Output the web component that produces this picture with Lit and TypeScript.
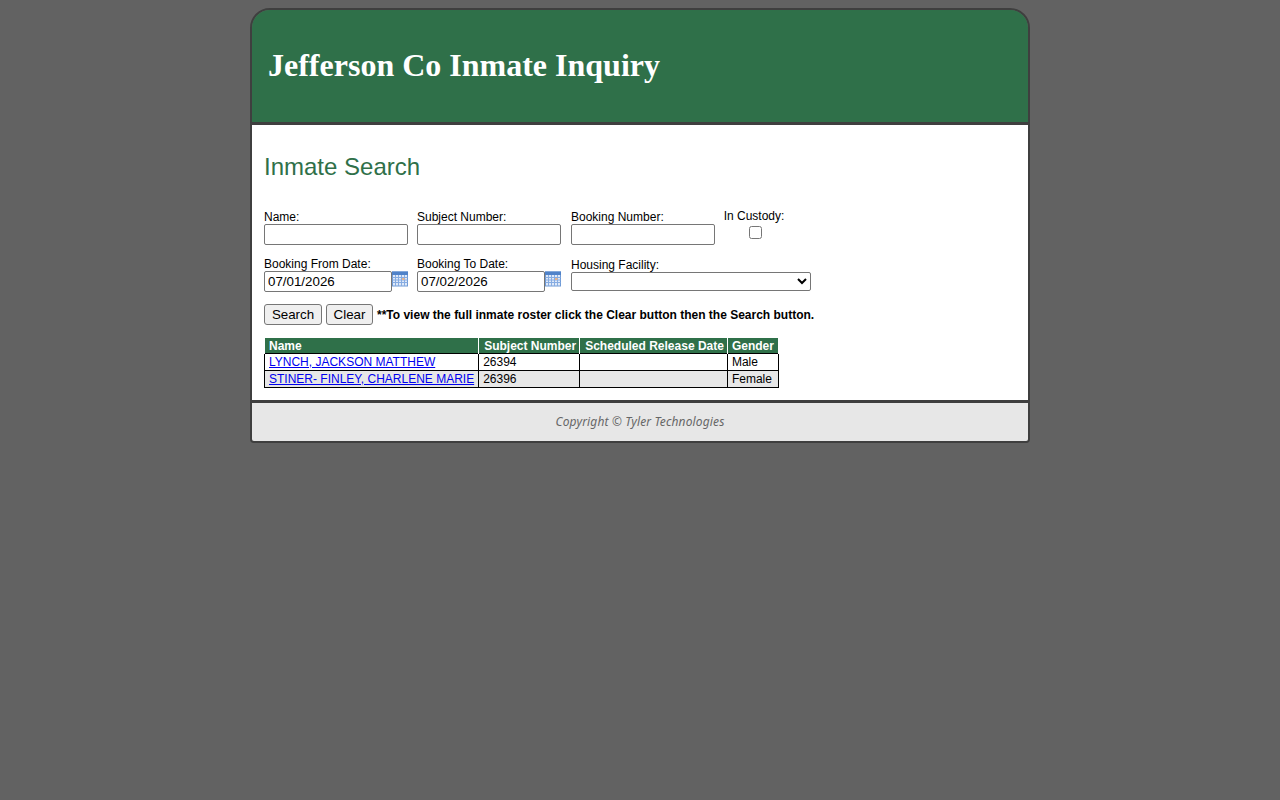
import { LitElement, html, css } from "lit";
import { customElement } from "lit/decorators.js";

const calIcon = html`<svg class="cal" width="16" height="16" viewBox="0 0 16 16">
  <rect x="0.5" y="1" width="15" height="14" fill="#dfe9f8" stroke="#6f9ad6"/>
  <rect x="0" y="0.5" width="16" height="3.5" fill="#4f82c9"/>
  <path d="M0.5 6.5H15.5M0.5 9H15.5M0.5 11.5H15.5M3.5 4V15M6.5 4V15M9.5 4V15M12.5 4V15" stroke="#86ace2" stroke-width="1" fill="none"/>
  <rect x="10" y="7" width="2.5" height="2" fill="#e8b48c"/>
</svg>`;

@customElement("app-root")
export class AppRoot extends LitElement {
  static styles = css`
    :host {
      display: block;
      min-height: 800px;
      background: #626262;
      font-family: "Liberation Sans", Arial, sans-serif;
      font-size: 12px;
      color: #000;
      padding-top: 8px;
      box-sizing: border-box;
    }
    .page {
      width: 780px;
      margin: 0 auto;
      box-sizing: border-box;
      border: 2px solid #3f3f3f;
      border-radius: 20px 20px 4px 4px;
      overflow: hidden;
    }
    .head {
      height: 110px;
      padding-bottom: 2px;
      background: #2f7049;
      border-bottom: 3px solid #3f3f3f;
      display: flex;
      align-items: center;
      padding-left: 16px;
      box-sizing: content-box;
    }
    .head h1 {
      margin: 0;
      color: #fff;
      font: bold 32px "Liberation Serif", "Times New Roman", serif;
    }
    .main {
      background: #fff;
      padding: 0 12px;
      height: 275px;
      box-sizing: border-box;
      overflow: hidden;
    }
    h2 {
      margin: 0;
      padding-top: 28px;
      height: 85px;
      box-sizing: border-box;
      font: normal 24px/28px "Liberation Sans", Arial, sans-serif;
      color: #2f7049;
    }
    .row {
      display: flex;
      align-items: flex-start;
    }
    .r1 { height: 47px; }
    .r2 { height: 47px; }
    .field { display: flex; flex-direction: column; }
    .f1 { width: 153px; }
    .f2 { width: 154px; }
    .f3 { width: 153px; }
    label { display: block; height: 14px; line-height: 14px; white-space: nowrap; }
    input[type="text"] {
      box-sizing: border-box;
      height: 21px;
      width: 144px;
      margin: 0;
      padding: 1px 3px;
      font: 13.33px "Liberation Sans", Arial, sans-serif;
      border: 1px solid #767676;
      border-radius: 2px;
      background: #fff;
      color: #000;
    }
    .date input[type="text"] { width: 128px; }
    .dateline { display: flex; align-items: flex-start; }
    .cal { display: block; }
    .custody { align-items: center; width: 60px; margin-top: -1px; }
    .custody input { margin: 3px 0 0 3px; width: 13px; height: 13px; }
    .housing label { margin-top: 1px; height: 13px; }
    select {
      box-sizing: border-box;
      width: 240px;
      height: 19px;
      margin: 1px 0 0;
      font: 13.33px "Liberation Sans", Arial, sans-serif;
      background: #fff;
      border: 1px solid #767676;
      border-radius: 2px;
    }
    .actions {
      display: flex;
      gap: 4px;
      height: 34px;
      align-items: flex-start;
    }
    button {
      box-sizing: border-box;
      height: 21px;
      margin: 0;
      padding: 1px 0;
      font: 13.33px "Liberation Sans", Arial, sans-serif;
      color: #000;
      background: #efefef;
      border: 1px solid #767676;
      border-radius: 3px;
    }
    .search { width: 58px; }
    .clear { width: 47px; }
    .note { font-weight: bold; line-height: 22px; }
    table {
      border-collapse: collapse;
      font-size: 12px;
      line-height: 14px;
    }
    th {
      background: #2f7049;
      color: #fff;
      font-weight: bold;
      text-align: left;
      padding: 1px 4px 0;
      border: 1px solid #fff;
      border-top: 0;
      border-bottom: 0;
      height: 15px;
      box-sizing: border-box;
      white-space: nowrap;
    }
    th.c { text-align: center; }
    th.s { padding: 1px 3px 0 5px; }
    td {
      border: 1px solid #000;
      padding: 1px 4px;
      height: 17px;
      box-sizing: border-box;
      white-space: nowrap;
    }
    tr.alt td { background: #e7e7e7; }
    a { color: #0000ee; text-decoration: underline; }
    .foot {
      border-top: 3px solid #3f3f3f;
      background: #e7e7e7;
      height: 37px;
      padding-bottom: 1px;
      display: flex;
      align-items: center;
      justify-content: center;
      font: italic 12px "Noto Sans", "Open Sans", sans-serif;
      letter-spacing: 0.14px;
      color: #666;
    }
  `;

  render() {
    return html`
      <div class="page">
        <div class="head"><h1>Jefferson Co Inmate Inquiry</h1></div>
        <div class="main">
          <h2>Inmate Search</h2>
          <div class="row r1">
            <div class="field f1"><label>Name:</label><input type="text" /></div>
            <div class="field f2"><label>Subject Number:</label><input type="text" /></div>
            <div class="field f3"><label>Booking Number:</label><input type="text" /></div>
            <div class="field custody"><label>In Custody:</label><input type="checkbox" /></div>
          </div>
          <div class="row r2">
            <div class="field f1 date">
              <label>Booking From Date:</label>
              <div class="dateline"><input type="text" .value=${"07/01/2026"} />${calIcon}</div>
            </div>
            <div class="field f2 date">
              <label>Booking To Date:</label>
              <div class="dateline"><input type="text" .value=${"07/02/2026"} />${calIcon}</div>
            </div>
            <div class="field housing"><label>Housing Facility:</label><select><option></option></select></div>
          </div>
          <div class="actions">
            <button class="search">Search</button><button class="clear">Clear</button>
            <span class="note">**To view the full inmate roster click the Clear button then the Search button.</span>
          </div>
          <table>
            <thead>
              <tr>
                <th>Name</th>
                <th class="c s">Subject Number</th>
                <th class="c s">Scheduled Release Date</th>
                <th class="c">Gender</th>
              </tr>
            </thead>
            <tbody>
              <tr>
                <td><a href="#">LYNCH, JACKSON MATTHEW</a></td>
                <td>26394</td>
                <td></td>
                <td>Male</td>
              </tr>
              <tr class="alt">
                <td><a href="#">STINER- FINLEY, CHARLENE MARIE</a></td>
                <td>26396</td>
                <td></td>
                <td>Female</td>
              </tr>
            </tbody>
          </table>
        </div>
        <div class="foot">Copyright © Tyler Technologies</div>
      </div>
    `;
  }
}
